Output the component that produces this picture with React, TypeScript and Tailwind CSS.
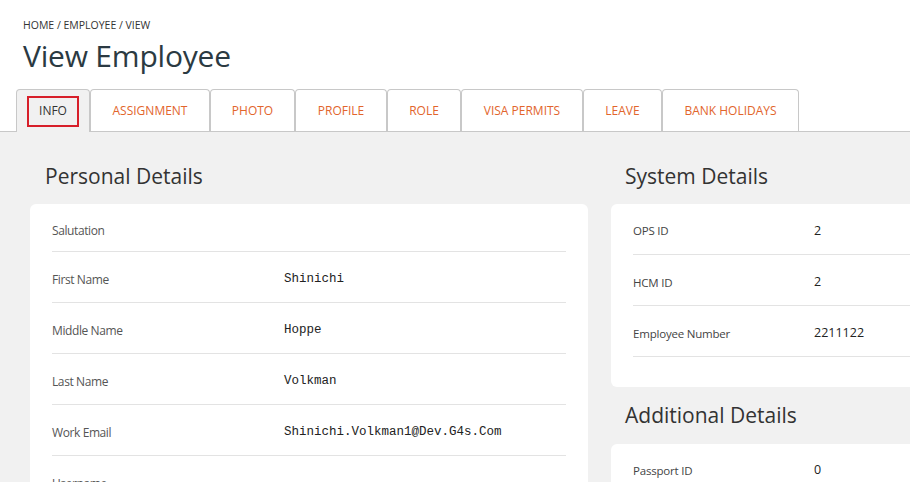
import React from "react";

const tabs = ["ASSIGNMENT", "PHOTO", "PROFILE", "ROLE", "VISA PERMITS", "LEAVE", "BANK HOLIDAYS"];
const tabWidths = ["w-[120px]", "w-[85px]", "w-[92px]", "w-[74px]", "w-[122px]", "w-[79px]", "w-[137px]"];

const personal: [string, string][] = [
  ["Salutation", ""],
  ["First Name", "Shinichi"],
  ["Middle Name", "Hoppe"],
  ["Last Name", "Volkman"],
  ["Work Email", "Shinichi.Volkman1@Dev.G4s.Com"],
  ["Username", ""],
];

const system: [string, string][] = [
  ["OPS ID", "2"],
  ["HCM ID", "2"],
  ["Employee Number", "2211122"],
];

export default function App() {
  return (
    <div className="w-[910px] h-[482px] overflow-hidden bg-white font-['Open_Sans',sans-serif] text-[#333]">
      <div className="px-[23px] pt-[18px]">
        <div className="text-[10.5px] leading-[14px] text-[#333]">HOME / EMPLOYEE / VIEW</div>
        <h1 className="mt-[4px] text-[30px] leading-[40px] text-[#2b3a42] tracking-[-0.2px]">View Employee</h1>
      </div>
      <div className="mt-[13px] flex items-end border-b border-[#c8c8c8] pl-[16px] h-[43px]">
        <div className="relative top-[1px] flex h-[43px] w-[74px] items-center justify-center rounded-t-[4px] border border-b-0 border-[#c8c8c8] bg-[#f1f1f1]">
          <span className="flex h-[31px] w-[52px] items-center justify-center border-2 border-[#d71f2a] text-[12px] text-[#333]">INFO</span>
        </div>
        {tabs.map((t, i) => (
          <div
            key={t}
            className={`flex h-[42px] ${tabWidths[i]} items-center justify-center rounded-t-[4px] border border-b-0 border-[#c8c8c8] bg-white pt-[1px] text-[12px] text-[#e2652c]`}
          >
            {t}
          </div>
        ))}
      </div>
      <div className="flex gap-[23px] bg-[#f1f1f1] pl-[30px] h-[350px]">
        <div className="w-[558px] shrink-0">
          <h2 className="pl-[15px] pt-[31px] text-[21px] leading-[26px] text-[#333]">Personal Details</h2>
          <div className="mt-[15px] rounded-[6px] bg-white px-[22px]">
            {personal.map(([k, v], i) => (
              <div
                key={k}
                className={`flex items-center border-b border-[#e3e3e3] ${i === 0 ? "h-[48px] pt-[7px]" : "h-[51px] pt-[5px]"}`}
              >
                <div className="w-[232px] text-[12px] tracking-[-0.4px] text-[#555]">{k}</div>
                <div className="font-['Liberation_Mono',monospace] text-[12.5px] text-[#222]">{v}</div>
              </div>
            ))}
          </div>
        </div>
        <div className="w-[340px] shrink-0">
          <h2 className="pl-[14px] pt-[31px] text-[21px] leading-[26px] text-[#333]">System Details</h2>
          <div className="mt-[15px] rounded-[6px] bg-white pl-[22px] pb-[30px]">
            {system.map(([k, v], i) => (
              <div key={k} className={`flex items-center border-b border-[#e3e3e3] ${i === 0 ? "h-[51px] pt-[4px]" : "h-[51px] pt-[5px]"}`}>
                <div className="w-[181px] text-[11.5px] tracking-[-0.2px] text-[#444]">{k}</div>
                <div className="text-[12.5px] text-[#222]">{v}</div>
              </div>
            ))}
          </div>
          <h2 className="pl-[14px] pt-[15px] text-[21px] leading-[26px] text-[#333]">Additional Details</h2>
          <div className="mt-[16px] rounded-[6px] bg-white pl-[22px] h-[60px]">
            <div className="flex h-[50px] items-center pt-[3px]">
              <div className="w-[181px] text-[11.5px] tracking-[-0.2px] text-[#444]">Passport ID</div>
              <div className="text-[12.5px] text-[#222]">0</div>
            </div>
          </div>
        </div>
      </div>
    </div>
  );
}
